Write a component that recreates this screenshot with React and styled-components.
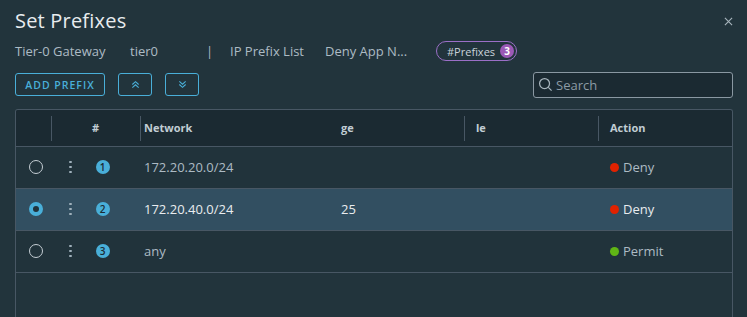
import React from "react";
import styled, { createGlobalStyle } from "styled-components";

const GlobalStyle = createGlobalStyle`
  html, body {
    margin: 0;
    padding: 0;
    background: #22343c;
    overflow: hidden;
  }
  * { box-sizing: border-box; }
`;

const Modal = styled.div`
  width: 747px;
  height: 317px;
  padding: 0 14px 0 15px;
  background: #22343c;
  font-family: "Open Sans", "Liberation Sans", sans-serif;
  color: #adbbc4;
  overflow: hidden;
`;

const TitleBar = styled.div`
  display: flex;
  align-items: center;
  justify-content: space-between;
  height: 40px;
  padding-top: 1px;
`;

const Title = styled.h1`
  margin: 0;
  font-size: 20px;
  font-weight: 400;
  color: #e9ecef;
  letter-spacing: 0.2px;
`;

const Close = styled.button`
  border: 0;
  background: none;
  padding: 0;
  margin-top: 2px;
  display: flex;
`;

const Crumbs = styled.div`
  display: flex;
  align-items: center;
  height: 22px;
  font-size: 13px;
  color: #adbbc4;
`;

const Crumb = styled.span`
  width: ${(p) => p.$w}px;
  flex: none;
  white-space: nowrap;
`;

const Pill = styled.span`
  display: inline-flex;
  align-items: center;
  gap: 5px;
  height: 20px;
  padding: 0 2px 0 10px;
  border: 1px solid #9b6fc7;
  border-radius: 10px;
  font-size: 11px;
  color: #c9d3da;
`;

const Count = styled.span`
  display: inline-flex;
  align-items: center;
  justify-content: center;
  width: 14px;
  height: 14px;
  border-radius: 50%;
  background: #9b59b6;
  color: #fff;
  font-size: 10px;
  font-weight: 700;
`;

const Toolbar = styled.div`
  display: flex;
  align-items: center;
  justify-content: space-between;
  margin-top: 10px;
  height: 25px;
`;

const Buttons = styled.div`
  display: flex;
  gap: 13px;
`;

const Button = styled.button`
  height: 23px;
  width: ${(p) => p.$w}px;
  padding: 0;
  border: 1px solid #49afd9;
  border-radius: 3px;
  background: transparent;
  color: #49afd9;
  font-family: inherit;
  font-size: 10.5px;
  font-weight: 600;
  letter-spacing: 1px;
  display: flex;
  align-items: center;
  justify-content: center;
`;

const Search = styled.label`
  display: flex;
  align-items: center;
  gap: 3px;
  width: 200px;
  height: 26px;
  padding: 0 8px 0 4px;
  border: 1px solid #8a98a2;
  border-radius: 3px;
  background: #1b2a32;
  color: #8c9ba5;
  font-size: 13px;
`;

const Grid = styled.div`
  margin-top: 12px;
  width: 718px;
  height: 220px;
  border: 1px solid #485764;
  border-bottom: 0;
  border-radius: 3px 3px 0 0;
  overflow: hidden;
`;

const cols = "35px 89px 197px 127px 134px 134px";

const Head = styled.div`
  display: grid;
  grid-template-columns: ${cols};
  height: 37px;
  background: #1b2a32;
  border-bottom: 1px solid #485764;
  font-size: 11px;
  font-weight: 700;
  color: #c1cdd4;
`;

const HeadCell = styled.div`
  display: flex;
  align-items: center;
  justify-content: ${(p) => (p.$center ? "center" : "flex-start")};
  padding-left: ${(p) => p.$pl || 0}px;
  padding-bottom: 2px;
  position: relative;
  &::before {
    content: "";
    display: ${(p) => (p.$divider ? "block" : "none")};
    position: absolute;
    left: 0;
    top: 6px;
    height: 25px;
    border-left: 1px solid #485764;
  }
`;

const Row = styled.div`
  display: grid;
  grid-template-columns: ${cols};
  height: 42px;
  border-bottom: 1px solid #485764;
  background: ${(p) => (p.$selected ? "#324f61" : "#21333b")};
  color: ${(p) => (p.$selected ? "#e9ecef" : "#adbbc4")};
  font-size: 13px;
`;

const Cell = styled.div`
  display: flex;
  align-items: center;
  padding-left: ${(p) => p.$pl || 0}px;
  padding-bottom: 1px;
`;

const Radio = styled.span`
  width: 14px;
  height: 14px;
  margin-left: 13px;
  border-radius: 50%;
  border: ${(p) => (p.$on ? "4.5px solid #49afd9" : "1.5px solid #c5ced4")};
  background: ${(p) => (p.$on ? "#21333b" : "transparent")};
`;

const Kebab = styled.span`
  display: flex;
  flex-direction: column;
  gap: 2.5px;
  margin-left: 18px;
  & > i {
    width: 2.5px;
    height: 2.5px;
    border-radius: 50%;
    background: #9fb0bb;
  }
`;

const Num = styled.span`
  display: inline-flex;
  align-items: center;
  justify-content: center;
  width: 14px;
  height: 14px;
  margin-left: 24px;
  border-radius: 50%;
  background: #49afd9;
  color: #1b2a32;
  font-size: 10px;
  font-weight: 600;
`;

const Dot = styled.span`
  width: 9px;
  height: 9px;
  border-radius: 50%;
  margin-right: 4px;
  background: ${(p) => (p.$ok ? "#60b515" : "#e12200")};
`;

const rows = [
  { n: 1, net: "172.20.20.0/24", ge: "", le: "", action: "Deny" },
  { n: 2, net: "172.20.40.0/24", ge: "25", le: "", action: "Deny", selected: true },
  { n: 3, net: "any", ge: "", le: "", action: "Permit" },
];

const Chevrons = ({ up }) => (
  <svg width="9" height="9" viewBox="0 0 10 10" fill="none" stroke="#49afd9" strokeWidth="1.2">
    {up ? (
      <>
        <path d="M1.5 5 L5 1.8 L8.5 5" />
        <path d="M1.5 8.5 L5 5.3 L8.5 8.5" />
      </>
    ) : (
      <>
        <path d="M1.5 1.5 L5 4.7 L8.5 1.5" />
        <path d="M1.5 5 L5 8.2 L8.5 5" />
      </>
    )}
  </svg>
);

const App = () => (
  <Modal>
    <GlobalStyle />
    <TitleBar>
      <Title>Set Prefixes</Title>
      <Close aria-label="close">
        <svg width="9" height="9" viewBox="0 0 10 10" stroke="#a9b6be" strokeWidth="1.2">
          <path d="M1 1 L9 9 M9 1 L1 9" />
        </svg>
      </Close>
    </TitleBar>
    <Crumbs>
      <Crumb $w={115}>Tier-0 Gateway</Crumb>
      <Crumb $w={76}>tier0</Crumb>
      <Crumb $w={24}>|</Crumb>
      <Crumb $w={95}>IP Prefix List</Crumb>
      <Crumb $w={111}>Deny App N...</Crumb>
      <Pill>
        #Prefixes <Count>3</Count>
      </Pill>
    </Crumbs>
    <Toolbar>
      <Buttons>
        <Button $w={90}>ADD PREFIX</Button>
        <Button $w={34}>
          <Chevrons up />
        </Button>
        <Button $w={34}>
          <Chevrons />
        </Button>
      </Buttons>
      <Search>
        <svg width="15" height="15" viewBox="0 0 16 16" fill="none" stroke="#a9b6be" strokeWidth="1.3">
          <circle cx="7" cy="7" r="5.3" />
          <path d="M11 11 L14.5 14.5" />
        </svg>
        Search
      </Search>
    </Toolbar>
    <Grid>
      <Head>
        <HeadCell />
        <HeadCell $center $divider>#</HeadCell>
        <HeadCell $divider $pl={4}>Network</HeadCell>
        <HeadCell $pl={4}>ge</HeadCell>
        <HeadCell $divider $pl={12}>le</HeadCell>
        <HeadCell $divider $pl={12}>Action</HeadCell>
      </Head>
      {rows.map((r) => (
        <Row key={r.n} $selected={r.selected}>
          <Cell>
            <Radio $on={r.selected} />
          </Cell>
          <Cell>
            <Kebab>
              <i />
              <i />
              <i />
            </Kebab>
            <Num>{r.n}</Num>
          </Cell>
          <Cell $pl={4}>{r.net}</Cell>
          <Cell $pl={4}>{r.ge}</Cell>
          <Cell $pl={12}>{r.le}</Cell>
          <Cell $pl={12}>
            <Dot $ok={r.action === "Permit"} />
            {r.action}
          </Cell>
        </Row>
      ))}
    </Grid>
  </Modal>
);

export default App;
